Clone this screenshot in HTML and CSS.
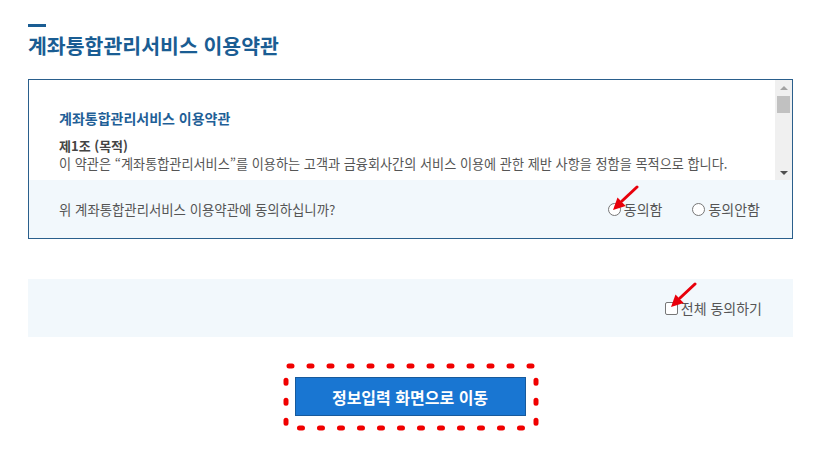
FILE: index.html
```html
<!DOCTYPE html>
<html lang="ko">
<head>
<meta charset="utf-8">
<title>계좌통합관리서비스 이용약관</title>
<link rel="stylesheet" href="styles.css">
</head>
<body>
<div class="page">
  <div class="head">
    <span class="accent"></span>
    <h1 class="title">계좌통합관리서비스 이용약관</h1>
  </div>

  <div class="terms">
    <div class="scroll">
      <div class="scroll-body">
        <h2 class="terms-title">계좌통합관리서비스 이용약관</h2>
        <p class="article">제1조 (목적)</p>
        <p class="text">이 약관은 “계좌통합관리서비스”를 이용하는 고객과 금융회사간의 서비스 이용에 관한 제반 사항을 정함을 목적으로 합니다.</p>
      </div>
      <div class="scrollbar">
        <span class="arrow-up"></span>
        <span class="thumb"></span>
        <span class="track"></span>
        <span class="arrow-down"></span>
      </div>
    </div>
    <div class="agree-row">
      <span class="question">위 계좌통합관리서비스 이용약관에 동의하십니까?</span>
      <div class="choices">
        <label class="choice">
          <span class="radio"></span>동의함
          <svg class="pointer" viewBox="0 0 34 30" width="34" height="30"><line x1="31" y1="2" x2="16" y2="16" stroke="#e8000b" stroke-width="3" stroke-linecap="round"/><polygon points="7,25 11.5,12.4 19.7,21" fill="#e8000b"/></svg>
        </label>
        <label class="choice">
          <span class="radio"></span>동의안함
        </label>
      </div>
    </div>
  </div>

  <div class="all-panel">
    <label class="all-check">
      <span class="checkbox"></span>전체 동의하기
      <svg class="pointer pointer-check" viewBox="0 0 34 30" width="34" height="30"><line x1="31" y1="2" x2="16" y2="16" stroke="#e8000b" stroke-width="3" stroke-linecap="round"/><polygon points="7,25 11.5,12.4 19.7,21" fill="#e8000b"/></svg>
    </label>
  </div>

  <div class="actions">
    <div class="btn-wrap">
      <svg class="highlight" viewBox="0 0 256 68" preserveAspectRatio="none"><path d="M6 3 H250 Q253 3 253 6 V62 Q253 65 250 65 H6 Q3 65 3 62 V6 Q3 3 6 3 Z" fill="none" stroke="#f00000" stroke-width="5" stroke-linecap="round" stroke-dasharray="3 17"/></svg>
      <button class="btn-next" type="button">정보입력 화면으로 이동</button>
    </div>
  </div>
</div>
</body>
</html>
```
FILE: styles.css
```css
* { box-sizing: border-box; }
html, body { margin: 0; padding: 0; background: #fff; }
html { min-height: 468px; }
body {
  font-family: "Noto Sans CJK KR", "Noto Sans", sans-serif;
  color: #555;
  min-height: 468px;
}
.page {
  width: 765px;
  margin-left: 28px;
  padding-top: 24px;
  padding-bottom: 20px;
}
.head { display: flex; flex-direction: column; }
.accent {
  display: block;
  width: 18px;
  height: 3px;
  background: #1a5d93;
}
.title {
  margin: 5px 0 0;
  font-size: 20.5px;
  line-height: 26px;
  font-weight: 700;
  color: #1a5d93;
}
.terms {
  margin-top: 21px;
  border: 1px solid #2a5f8c;
}
.scroll {
  display: flex;
  height: 100px;
}
.scroll-body {
  flex: 1;
  padding: 28px 30px 0 30px;
}
.terms-title {
  margin: 0 0 8px;
  font-size: 14px;
  line-height: 21px;
  font-weight: 700;
  color: #1f5f97;
}
.article {
  margin: 0;
  font-size: 13px;
  line-height: 18px;
  font-weight: 700;
  color: #444;
}
.text {
  margin: 0;
  font-size: 13.15px;
  line-height: 18px;
  color: #555;
  white-space: nowrap;
}
.scrollbar {
  width: 17px;
  background: #f0f0f0;
  display: flex;
  flex-direction: column;
  align-items: center;
  padding: 6px 0 5px;
}
.arrow-up {
  width: 0; height: 0;
  border-left: 4px solid transparent;
  border-right: 4px solid transparent;
  border-bottom: 4px solid #a3a3a3;
}
.thumb {
  width: 13px;
  height: 17px;
  background: #c1c1c1;
  margin-top: 6px;
}
.track { flex: 1; }
.arrow-down {
  width: 0; height: 0;
  border-left: 4px solid transparent;
  border-right: 4px solid transparent;
  border-top: 4px solid #505050;
}
.agree-row {
  height: 58px;
  background: #f2f8fc;
  display: flex;
  align-items: center;
  justify-content: space-between;
  padding: 0 32px 0 30px;
}
.question {
  font-size: 13.4px;
  color: #555;
}
.choices {
  display: flex;
  gap: 30px;
}
.choice {
  position: relative;
  display: flex;
  align-items: center;
  gap: 3px;
  font-size: 14px;
  line-height: 20px;
  color: #555;
}
.radio {
  width: 13px;
  height: 13px;
  border: 1px solid #777;
  border-radius: 50%;
  background: #fff;
}
.pointer {
  position: absolute;
  left: -2px;
  top: -14px;
}
.all-panel {
  margin-top: 40px;
  height: 58px;
  background: #f2f8fc;
  display: flex;
  align-items: center;
  justify-content: flex-end;
  padding-right: 31px;
}
.all-check {
  position: relative;
  display: flex;
  align-items: center;
  gap: 3px;
  font-size: 14px;
  line-height: 20px;
  color: #555;
}
.checkbox {
  width: 13px;
  height: 13px;
  border: 1px solid #777;
  border-radius: 2px;
  background: #fff;
}
.pointer-check {
  left: -1px;
  top: -16px;
}
.actions {
  margin-top: 26px;
  display: flex;
  justify-content: center;
}
.btn-wrap {
  position: relative;
  padding: 14px 13px 15px 12px;
}
.btn-next {
  position: relative;
  display: block;
  width: 231px;
  height: 39px;
  border: 1px solid #175a9c;
  background: #1976d2;
  color: #fff;
  font-family: "Noto Sans CJK KR", "Noto Sans", sans-serif;
  font-size: 16px;
  font-weight: 700;
  padding: 0;
}
.highlight {
  position: absolute;
  left: 0;
  top: 0;
  width: 100%;
  height: 100%;
  overflow: visible;
}
```
